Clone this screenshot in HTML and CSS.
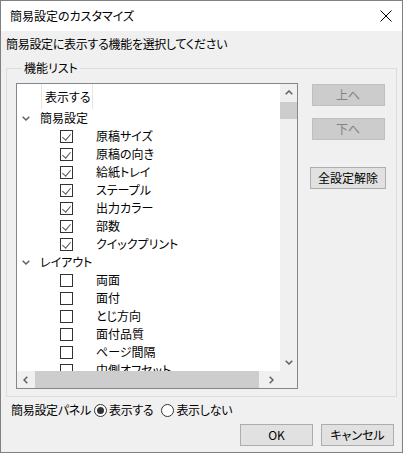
FILE: index.html
```html
<!DOCTYPE html>
<html lang="ja">
<head>
<meta charset="utf-8">
<link rel="stylesheet" href="styles.css">
</head>
<body>
<div class="window">
  <div class="titlebar">
    <span class="title">簡易設定のカスタマイズ</span>
    <svg class="close" width="12" height="12" viewBox="0 0 12 12"><path d="M0.5 0.5 L11.5 11.5 M11.5 0.5 L0.5 11.5" stroke="#000" stroke-width="1" fill="none"/></svg>
  </div>
  <div class="content">
    <div class="prompt">簡易設定に表示する機能を選択してください</div>
    <fieldset class="group">
      <legend>機能リスト</legend>
      <div class="group-body">
        <div class="listbox">
          <div class="list-view">
            <div class="header"><div class="hcell">表示する</div></div>
            <div class="row grp"><svg class="chev" width="8" height="5" viewBox="0 0 8 5"><polyline points="0.7,0.7 4,4 7.3,0.7" stroke="#5a5a5a" stroke-width="1.4" fill="none"/></svg><span>簡易設定</span></div>
            <div class="row item"><span class="cb on"></span><span>原稿サイズ</span></div>
            <div class="row item"><span class="cb on"></span><span>原稿の向き</span></div>
            <div class="row item"><span class="cb on"></span><span>給紙トレイ</span></div>
            <div class="row item"><span class="cb on"></span><span>ステープル</span></div>
            <div class="row item"><span class="cb on"></span><span>出力カラー</span></div>
            <div class="row item"><span class="cb on"></span><span>部数</span></div>
            <div class="row item"><span class="cb on"></span><span>クイックプリント</span></div>
            <div class="row grp"><svg class="chev" width="8" height="5" viewBox="0 0 8 5"><polyline points="0.7,0.7 4,4 7.3,0.7" stroke="#5a5a5a" stroke-width="1.4" fill="none"/></svg><span>レイアウト</span></div>
            <div class="row item"><span class="cb"></span><span>両面</span></div>
            <div class="row item"><span class="cb"></span><span>面付</span></div>
            <div class="row item"><span class="cb"></span><span>とじ方向</span></div>
            <div class="row item"><span class="cb"></span><span>面付品質</span></div>
            <div class="row item"><span class="cb"></span><span>ページ間隔</span></div>
            <div class="row item"><span class="cb"></span><span>中側オフセット</span></div>
          </div>
          <div class="vscroll">
            <div class="sbtn"><svg width="8" height="5" viewBox="0 0 8 5"><polyline points="0.7,4.3 4,1 7.3,4.3" stroke="#606060" stroke-width="1.5" fill="none"/></svg></div>
            <div class="vtrack"><div class="vthumb"></div></div>
            <div class="sbtn"><svg width="8" height="5" viewBox="0 0 8 5"><polyline points="0.7,0.7 4,4 7.3,0.7" stroke="#606060" stroke-width="1.5" fill="none"/></svg></div>
          </div>
          <div class="hscroll">
            <div class="sbtn"><svg width="5" height="8" viewBox="0 0 5 8"><polyline points="4.3,0.7 1,4 4.3,7.3" stroke="#606060" stroke-width="1.5" fill="none"/></svg></div>
            <div class="htrack"><div class="hthumb"></div></div>
            <div class="sbtn"><svg width="5" height="8" viewBox="0 0 5 8"><polyline points="0.7,0.7 4,4 0.7,7.3" stroke="#606060" stroke-width="1.5" fill="none"/></svg></div>
          </div>
          <div class="corner"></div>
        </div>
        <div class="side">
          <div class="btn disabled">上へ</div>
          <div class="btn disabled">下へ</div>
          <div class="btn wide">全設定解除</div>
        </div>
      </div>
    </fieldset>
    <div class="panel-row">
      <span class="label">簡易設定パネル</span>
      <span class="radio on"></span><span class="rlabel">表示する</span>
      <span class="radio"></span><span class="rlabel">表示しない</span>
    </div>
    <div class="actions">
      <div class="btn">OK</div>
      <div class="btn">キャンセル</div>
    </div>
  </div>
</div>
</body>
</html>
```
FILE: styles.css
```css
* { box-sizing: border-box; }
html, body { margin: 0; padding: 0; background: #f0f0f0; }
body {
  font-family: "Noto Sans CJK JP", "Noto Sans", sans-serif;
  font-size: 12px;
  font-feature-settings: "palt";
  color: #000;
}
.window {
  width: 403px;
  height: 453px;
  border: 1px solid #808080;
  background: #f0f0f0;
  display: flex;
  flex-direction: column;
}
.titlebar {
  height: 30px;
  background: #fff;
  display: flex;
  align-items: center;
  justify-content: space-between;
  padding: 0 10px 0 9px;
}
.title { line-height: 16px; }
.close { display: block; }
.content { display: flex; flex-direction: column; }
.prompt {
  line-height: 16px;
  margin: 5px 0 0 5px;
  letter-spacing: -0.3px;
}
.group {
  margin: 8px 5px 0 5px;
  border: 1px solid #dcdcdc;
  padding: 7px 0 7px 9px;
  min-width: 0;
}
.group legend {
  line-height: 16px;
  padding: 0 2px;
  margin-left: 6px;
}
.group-body { display: flex; }
.listbox {
  width: 282px;
  height: 306px;
  border: 1px solid #828790;
  background: #fff;
  display: grid;
  grid-template-columns: 1fr 17px;
  grid-template-rows: 1fr 17px;
}
.list-view { overflow: hidden; }
.header { height: 25px; padding-left: 24px; }
.hcell {
  width: 52px;
  height: 25px;
  border-left: 1px solid #e5e5e5;
  border-right: 1px solid #e5e5e5;
  padding: 5px 0 0 3px;
  line-height: 16px;
  white-space: nowrap;
}
.row {
  height: 18px;
  display: flex;
  align-items: center;
  white-space: nowrap;
  line-height: 16px;
}
.grp .chev { margin-left: 5px; margin-right: 10px; display: block; }
.item { padding-left: 43px; }
.cb {
  width: 13px;
  height: 13px;
  border: 1px solid #333;
  background: #fff;
  margin-right: 23px;
  position: relative;
  flex: none;
}
.cb.on::after {
  content: "";
  position: absolute;
  left: 3px;
  top: 1px;
  width: 4px;
  height: 7px;
  border-right: 1px solid #555;
  border-bottom: 1px solid #555;
  transform: rotate(40deg);
}
.vscroll {
  background: #f0f0f0;
  display: flex;
  flex-direction: column;
}
.hscroll {
  background: #f0f0f0;
  display: flex;
}
.corner { background: #f0f0f0; }
.sbtn {
  width: 17px;
  height: 17px;
  flex: none;
  display: flex;
  align-items: center;
  justify-content: center;
}
.sbtn svg { display: block; }
.vtrack { flex: 1; }
.vthumb { height: 17px; background: #cdcdcd; margin-top: 1px; }
.htrack { flex: 1; }
.hthumb { width: 224px; height: 17px; background: #cdcdcd; margin-left: 1px; }
.side {
  width: 76px;
  display: flex;
  flex-direction: column;
  align-items: center;
  margin-left: 12px;
  padding-top: 1px;
}
.btn {
  width: 73px;
  height: 22px;
  background: #e1e1e1;
  border: 1px solid #adadad;
  display: flex;
  align-items: center;
  justify-content: center;
  line-height: 16px;
  white-space: nowrap;
}
.btn.disabled {
  background: #cccccc;
  border-color: #bfbfbf;
  color: #838383;
}
.side .btn + .btn { margin-top: 12px; }
.side .btn.wide { width: 76px; margin-top: 27px; }
.panel-row {
  display: flex;
  align-items: center;
  margin: 5px 0 0 10px;
  height: 16px;
  line-height: 16px;
}
.label { margin-right: 3px; letter-spacing: -0.3px; }
.radio {
  width: 13px;
  height: 13px;
  border: 1px solid #333;
  border-radius: 50%;
  background: #fff;
  margin-right: 2px;
  display: flex;
  align-items: center;
  justify-content: center;
  flex: none;
}
.radio.on::after {
  content: "";
  width: 7px;
  height: 7px;
  border-radius: 50%;
  background: #333;
}
.rlabel { margin-right: 8px; letter-spacing: -0.3px; }
.actions {
  display: flex;
  justify-content: flex-end;
  gap: 8px;
  margin: 6px 8px 0 0;
}
```
